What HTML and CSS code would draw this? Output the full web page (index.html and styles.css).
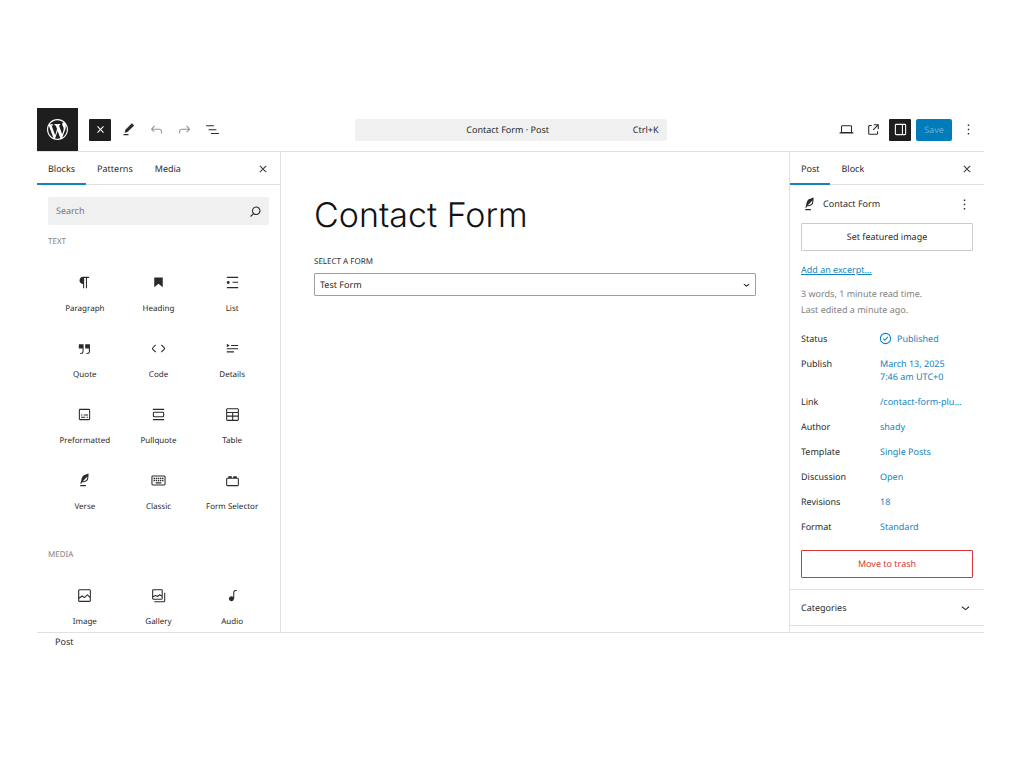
FILE: index.html
```html
<!DOCTYPE html>
<html lang="en">
<head>
<meta charset="utf-8">
<title>Contact Form</title>
<link rel="stylesheet" href="styles.css">
</head>
<body>
<div class="editor">
  <header class="header">
    <div class="header-start">
      <a class="logo" href="#" aria-label="View posts"><svg viewBox="0 0 20 20"><path d="M20 10c0-5.51-4.49-10-10-10C4.48 0 0 4.49 0 10c0 5.52 4.48 10 10 10 5.51 0 10-4.48 10-10zM7.78 15.37L4.37 6.22c.55-.02 1.17-.08 1.17-.08.5-.06.44-1.13-.06-1.11 0 0-1.45.11-2.37.11-.18 0-.37 0-.58-.01C4.12 2.69 6.87 1.11 10 1.11c2.33 0 4.45.87 6.05 2.34-.68-.11-1.65.39-1.65 1.58 0 .74.45 1.36.9 2.1.35.61.55 1.36.55 2.46 0 1.49-1.4 5-1.4 5l-3.03-8.37c.54-.02.82-.17.82-.17.5-.05.44-1.25-.06-1.22 0 0-1.44.12-2.38.12-.87 0-2.33-.12-2.33-.12-.5-.03-.56 1.2-.06 1.22l.92.08 1.26 3.41zM17.41 10c.24-.64.74-1.87.43-4.25.7 1.29 1.05 2.71 1.05 4.25 0 3.29-1.73 6.24-4.4 7.78.97-2.59 1.94-5.2 2.92-7.78zM6.1 18.09C3.12 16.65 1.11 13.53 1.11 10c0-1.3.23-2.48.72-3.59C3.25 10.3 4.67 14.2 6.1 18.09zm4.03-6.63l2.58 6.98c-.86.29-1.76.45-2.71.45-.79 0-1.57-.11-2.29-.33.81-2.38 1.62-4.74 2.42-7.1z"/></svg></a>
      <div class="tools">
        <button class="tool tool-active" aria-label="Close block inserter"><svg class="icon" viewBox="0 0 24 24"><path d="M12 13.06l3.712 3.713 1.061-1.06L13.061 12l3.712-3.712-1.06-1.06L12 10.938 8.288 7.227l-1.061 1.06L10.939 12l-3.712 3.712 1.06 1.061L12 13.061z"/></svg></button>
        <button class="tool" aria-label="Edit"><svg class="icon" viewBox="0 0 24 24"><path d="m20 6.500-3.200-3.200-9.300 9.200-1 4 4-1L20 6.500Zm-8 12H5V20h7v-1.500Z"/></svg></button>
        <button class="tool tool-disabled" aria-label="Undo" disabled><svg class="icon" viewBox="0 0 24 24"><path d="M18.300 11.700c-.6-.6-1.400-.9-2.300-.9H6.700l2.900-3.300-1.100-1-4.500 5L8.500 16l1-1-2.700-2.700H16c.5 0 .9.2 1.300.5 1 1 1 3.400 1 4.500v.3h1.500v-.2c0-1.500 0-4.300-1.500-5.700z"/></svg></button>
        <button class="tool tool-disabled" aria-label="Redo" disabled><svg class="icon" viewBox="0 0 24 24"><path d="M15.600 6.500l-1.100 1 2.900 3.300H8c-.9 0-1.700.3-2.300.9-1.400 1.500-1.400 4.200-1.400 5.600v.2h1.500v-.3c0-1.100 0-3.500 1-4.500.3-.3.7-.5 1.300-.5h9.200L14.500 15l1.100 1.100 4.600-4.600-4.600-5z"/></svg></button>
        <button class="tool" aria-label="Document overview"><svg class="icon" viewBox="0 0 24 24"><path d="M3 6h11v1.500H3V6Zm3.500 5.500h11V13h-11v-1.500ZM21 17H10v1.500h11V17Z"/></svg></button>
      </div>
    </div>
    <button class="command"><span class="command-title">Contact Form · Post</span><span>Ctrl+K</span></button>
    <div class="header-end">
      <button class="tool" aria-label="View"><svg class="icon" viewBox="0 0 24 24"><path d="M20.500 16h-.7V8c0-1.100-.9-2-2-2H6.200c-1.100 0-2 .9-2 2v8h-.7c-.8 0-1.500.7-1.500 1.500h20c0-.8-.7-1.500-1.500-1.500zM5.700 8c0-.3.2-.5.5-.5h11.600c.3 0 .5.2.5.5v7.600H5.700V8z"/></svg></button>
      <button class="tool" aria-label="View post"><svg class="icon" viewBox="0 0 24 24"><path d="M19.500 4.500h-7V6h4.440l-5.970 5.970 1.060 1.060L18 7.060v4.440h1.500v-7Zm-13 1a2 2 0 0 0-2 2v10a2 2 0 0 0 2 2h10a2 2 0 0 0 2-2v-3H17v3a.5.5 0 0 1-.5.5h-10a.5.5 0 0 1-.5-.5v-10a.5.5 0 0 1 .5-.5h3V5.500h-3Z"/></svg></button>
      <button class="tool tool-active" aria-label="Settings"><svg class="icon" viewBox="0 0 24 24"><path fill-rule="evenodd" d="M18 4H6c-1.100 0-2 .9-2 2v12c0 1.100.9 2 2 2h12c1.100 0 2-.9 2-2V6c0-1.100-.9-2-2-2zm-4 14.500H6c-.3 0-.5-.2-.5-.5V6c0-.3.2-.5.5-.5h8v13zm4.500-.5c0 .3-.2.5-.5.5h-2.500v-13H18c.3 0 .5.2.5.5v12z"/></svg></button>
      <button class="save">Save</button>
      <button class="tool" aria-label="Options"><svg class="icon" viewBox="0 0 24 24"><path d="M13 19h-2v-2h2v2zm0-6h-2v-2h2v2zm0-6h-2V5h2v2z"/></svg></button>
    </div>
  </header>

  <div class="body">
    <section class="inserter">
      <div class="tabs">
        <button class="tab tab-current">Blocks</button>
        <button class="tab">Patterns</button>
        <button class="tab">Media</button>
        <button class="tool tab-close" aria-label="Close"><svg class="icon" viewBox="0 0 24 24"><path d="m13.060 12 6.470-6.470-1.060-1.060L12 10.940 5.530 4.470 4.470 5.530 10.940 12l-6.470 6.470 1.060 1.060L12 13.060l6.470 6.470 1.060-1.060L13.060 12Z"/></svg></button>
      </div>
      <div class="blocks">
        <div class="search">
          <input class="search-input" type="search" placeholder="Search" aria-label="Search">
          <svg class="icon" viewBox="0 0 24 24"><path d="M13 5c-3.300 0-6 2.700-6 6 0 1.400.5 2.700 1.300 3.700l-3.800 3.800 1.100 1.100 3.800-3.800c1 .8 2.300 1.300 3.700 1.300 3.300 0 6-2.700 6-6S16.300 5 13 5zm0 10.500c-2.500 0-4.500-2-4.500-4.500s2-4.500 4.500-4.500 4.500 2 4.500 4.500-2 4.500-4.500 4.500z"/></svg>
        </div>
        <h2 class="group-title">Text</h2>
        <div class="grid">
          <button class="tile"><svg class="icon" viewBox="0 0 24 24"><path d="m9.996 14v-.225l.004 0v6.225h1.500v-14.500h2.500v14.500h1.500v-14.500h3v-1.500h-8.504c-2.761 0-5 2.239-5 5 0 2.761 2.239 5 5 5z"/></svg>Paragraph</button>
          <button class="tile"><svg class="icon" viewBox="0 0 24 24"><path d="M6 5V18.591L12 13.847L18 18.591V5H6Z"/></svg>Heading</button>
          <button class="tile"><svg class="icon" viewBox="0 0 24 24"><path d="M4 4v1.500h16V4H4zm8 8.500h8V11h-8v1.500zM4 20h16v-1.500H4V20zm4-8c0-1.100-.9-2-2-2s-2 .9-2 2 .9 2 2 2 2-.9 2-2z"/></svg>List</button>
          <button class="tile"><svg class="icon" viewBox="0 0 24 24"><path d="M13 6v6h5.200v4c0 .8-.2 1.400-.5 1.700-.6.6-1.600.6-2.500.5h-.3v1.500h.5c1 0 2.300-.1 3.300-1 .6-.6 1-1.600 1-2.800V6H13zm-9 6h5.200v4c0 .8-.2 1.400-.5 1.700-.6.6-1.600.6-2.500.5h-.3v1.500h.5c1 0 2.300-.1 3.300-1 .6-.6 1-1.600 1-2.800V6H4v6z"/></svg>Quote</button>
          <button class="tile"><svg class="icon" viewBox="0 0 24 24"><path d="M20.800 10.700l-4.300-4.300-1.100 1.100 4.300 4.300c.1.100.1.300 0 .4l-4.300 4.300 1.100 1.100 4.300-4.300c.7-.8.7-1.900 0-2.600zM4.200 11.800l4.300-4.300-1-1-4.300 4.300c-.7.700-.7 1.800 0 2.500l4.300 4.300 1.100-1.100-4.300-4.300c-.2-.1-.2-.3-.1-.4z"/></svg>Code</button>
          <button class="tile"><svg class="icon" viewBox="0 0 24 24"><path d="M4 16h10v1.500H4V16Zm0-4.500h16V13H4v-1.500ZM10 7h10v1.500H10V7ZM4 5.250l4 2.500-4 2.500v-5Z"/></svg>Details</button>
          <button class="tile"><svg class="icon" viewBox="0 0 24 24"><path d="M18 4H6c-1.100 0-2 .9-2 2v12c0 1.100.9 2 2 2h12c1.100 0 2-.9 2-2V6c0-1.100-.9-2-2-2zm.5 14c0 .3-.2.5-.5.5H6c-.3 0-.5-.2-.5-.5V6c0-.3.2-.5.5-.5h12c.3 0 .5.2.5.5v12zM7 16.500h6V15H7v1.500zm4-3h6V12h-6v1.500zM9 12H7v1.500h2V12zm6 4.500h2V15h-2v1.500z"/></svg>Preformatted</button>
          <button class="tile"><svg class="icon" viewBox="0 0 24 24"><path d="M18 8H6c-1.100 0-2 .9-2 2v4c0 1.100.9 2 2 2h12c1.100 0 2-.9 2-2v-4c0-1.100-.9-2-2-2zm.5 6c0 .3-.2.5-.5.5H6c-.3 0-.5-.2-.5-.5v-4c0-.3.2-.5.5-.5h12c.3 0 .5.2.5.5v4zM4 4v1.500h16V4H4zm0 16h16v-1.500H4V20z"/></svg>Pullquote</button>
          <button class="tile"><svg class="icon" viewBox="0 0 24 24"><path d="M19 3H5c-1.100 0-2 .9-2 2v14c0 1.100.9 2 2 2h14c1.100 0 2-.9 2-2V5c0-1.100-.9-2-2-2zM5 4.500h14c.3 0 .5.2.5.5v3.500h-15V5c0-.3.2-.5.5-.5zm8 5.500h6.500v3.500H13V10zm-1.500 3.500h-7V10h7v3.500zm-7 5.500v-4h7v4.500H5c-.3 0-.5-.2-.5-.5zm14.500.5h-6V15h6.500v4c0 .3-.2.5-.5.5z"/></svg>Table</button>
          <button class="tile"><svg class="icon" viewBox="0 0 24 24"><path d="M17.800 2l-.9.3c-.1 0-3.600 1-5.200 2.100C10 5.500 9.300 6.500 8.900 7.100c-.6.9-1.700 4.700-1.700 6.300l-.9 2.300c-.2.4 0 .8.4 1 .1 0 .2.100.3.100.3 0 .6-.2.7-.5l.6-1.500c.3 0 .7-.1 1.200-.2.7-.1 1.400-.3 2.200-.5.8-.2 1.600-.5 2.400-.8.7-.3 1.400-.7 1.900-1.200s.8-1.200 1-1.900c.2-.7.3-1.600.4-2.400.1-.8.1-1.700.2-2.500 0-.8.1-1.500.2-2.100V2zm-1.900 5.600c-.1.8-.2 1.500-.3 2.100-.2.6-.4 1-.6 1.300-.3.3-.8.6-1.400.9-.7.3-1.400.5-2.200.8-.6.2-1.300.3-1.800.4L15 7.500c.3-.3.6-.7 1-1.100 0 .4 0 .8-.1 1.200zM6 20h8v-1.500H6V20z"/></svg>Verse</button>
          <button class="tile"><svg class="icon" viewBox="0 0 24 24"><path fill-rule="evenodd" d="M4 5h16c1.100 0 2 .9 2 2v10c0 1.100-.9 2-2 2H4c-1.100 0-2-.9-2-2V7c0-1.100.9-2 2-2zm0 1.500c-.3 0-.5.2-.5.500v10c0 .3.200.5.5.5h16c.3 0 .5-.2.5-.5V7c0-.3-.2-.5-.5-.5zM5 8.200h2v2H5zm3 0h2v2H8zm3 0h2v2h-2zm3 0h2v2h-2zm3 0h2v2h-2zM5 11.200h2v2H5zm3 0h2v2H8zm3 0h2v2h-2zm3 0h2v2h-2zm3 0h2v2h-2zM8 14.500h8v1.700H8z"/></svg>Classic</button>
          <button class="tile"><svg class="icon" viewBox="0 0 24 24"><path d="M19 8h-1V6h-5v2h-2V6H6v2H5c-1.100 0-2 .9-2 2v8c0 1.100.9 2 2 2h14c1.100 0 2-.9 2-2v-8c0-1.100-.9-2-2-2zm.5 10c0 .3-.2.5-.5.5H5c-.3 0-.5-.2-.5-.5v-8c0-.3.2-.5.5-.5h14c.3 0 .5.2.5.5v8z"/></svg>Form Selector</button>
        </div>
        <h2 class="group-title">Media</h2>
        <div class="grid">
          <button class="tile"><svg class="icon" viewBox="0 0 24 24"><path d="M19 3H5c-1.100 0-2 .9-2 2v14c0 1.100.9 2 2 2h14c1.100 0 2-.9 2-2V5c0-1.100-.9-2-2-2zM5 4.500h14c.3 0 .5.2.5.5v8.400l-3-2.900c-.3-.3-.8-.3-1 0L11.900 14 9 12c-.3-.2-.6-.2-.8 0l-3.600 2.600V5c-.1-.3.1-.5.4-.5zm14 15H5c-.3 0-.5-.2-.5-.5v-2.400l4.100-3 3 1.900c.3.2.7.2.9-.1L16 12l3.500 3.400V19c0 .3-.2.5-.5.5z"/></svg>Image</button>
          <button class="tile"><svg class="icon" viewBox="0 0 24 24"><path fill-rule="evenodd" d="M16.375 4.500H4.625a.125.125 0 0 0-.125.125v8.254l2.859-1.540a.75.75 0 0 1 .68-.016l2.384 1.142 2.890-2.074a.75.75 0 0 1 .874 0l2.313 1.660V4.625a.125.125 0 0 0-.125-.125Zm.125 9.398-2.750-1.975-2.813 2.020a.75.75 0 0 1-.76.067l-2.444-1.170L4.500 14.583v1.792c0 .069.056.125.125.125h11.750a.125.125 0 0 0 .125-.125v-2.477ZM4.625 3C3.728 3 3 3.728 3 4.625v11.750C3 17.273 3.728 18 4.625 18h11.750c.898 0 1.625-.727 1.625-1.625V4.625C18 3.728 17.273 3 16.375 3H4.625ZM20 8v11c0 .69-.31 1-.999 1H6v1.500h13.001c1.520 0 2.499-.982 2.499-2.500V8H20Z"/></svg>Gallery</button>
          <button class="tile"><svg class="icon" viewBox="0 0 24 24"><path d="M17.700 4.300c-1.200 0-2.800 0-3.800 1-.6.6-.9 1.500-.9 2.600V14c-.6-.6-1.500-1-2.500-1C8.600 13 7 14.600 7 16.500S8.600 20 10.500 20c1.500 0 2.800-1 3.300-2.300.5-.8.7-1.800.7-2.500V7.900c0-.7.2-1.200.5-1.600.6-.6 1.800-.6 2.800-.6h.3V4.300h-.4z"/></svg>Audio</button>
        </div>
      </div>
    </section>

    <main class="canvas">
      <h1 class="title">Contact Form</h1>
      <label class="field-label" for="form">Select a form</label>
      <div class="select-wrap">
        <select class="select" id="form"><option>Test Form</option></select>
        <svg class="select-arrow" viewBox="0 0 24 24"><path d="M17.500 11.600L12 16l-5.500-4.400.9-1.200L12 14l4.500-3.600 1 1.200z"/></svg>
      </div>
    </main>

    <aside class="sidebar">
      <div class="tabs">
        <button class="tab tab-current">Post</button>
        <button class="tab">Block</button>
        <button class="tool tab-close" aria-label="Close settings"><svg class="icon" viewBox="0 0 24 24"><path d="m13.060 12 6.470-6.470-1.060-1.060L12 10.940 5.530 4.470 4.470 5.530 10.940 12l-6.470 6.470 1.060 1.060L12 13.060l6.470 6.470 1.060-1.060L13.060 12Z"/></svg></button>
      </div>
      <div class="summary">
        <div class="card">
          <svg class="icon" viewBox="0 0 24 24"><path d="M17.800 2l-.9.3c-.1 0-3.600 1-5.200 2.100C10 5.500 9.300 6.500 8.900 7.100c-.6.9-1.700 4.700-1.700 6.300l-.9 2.300c-.2.4 0 .8.4 1 .1 0 .2.100.3.100.3 0 .6-.2.7-.5l.6-1.500c.3 0 .7-.1 1.200-.2.7-.1 1.400-.3 2.200-.5.8-.2 1.600-.5 2.400-.8.7-.3 1.400-.7 1.900-1.200s.8-1.200 1-1.900c.2-.7.3-1.600.4-2.400.1-.8.1-1.700.2-2.500 0-.8.1-1.500.2-2.100V2zm-1.900 5.600c-.1.8-.2 1.500-.3 2.100-.2.6-.4 1-.6 1.300-.3.3-.8.6-1.400.9-.7.3-1.400.5-2.200.8-.6.2-1.300.3-1.800.4L15 7.500c.3-.3.6-.7 1-1.100 0 .4 0 .8-.1 1.200zM6 20h8v-1.500H6V20z"/></svg>
          <span class="card-title">Contact Form</span>
          <button class="card-more" aria-label="Actions"><svg class="icon" viewBox="0 0 24 24"><path d="M13 19h-2v-2h2v2zm0-6h-2v-2h2v2zm0-6h-2V5h2v2z"/></svg></button>
        </div>
        <button class="outline">Set featured image</button>
        <a class="excerpt" href="#">Add an excerpt…</a>
        <p class="meta">3 words, 1 minute read time.<br>Last edited a minute ago.</p>
        <dl class="rows">
          <div class="row"><dt>Status</dt><dd><button class="value"><svg class="icon value-icon" viewBox="0 0 24 24"><g fill="none" stroke="currentColor" stroke-width="1.500"><circle cx="12" cy="12" r="7.250"/><path d="m8.700 12.200 2.400 2.300 4.200-4.800"/></g></svg>Published</button></dd></div>
          <div class="row"><dt>Publish</dt><dd><button class="value">March 13, 2025<br>7:46 am UTC+0</button></dd></div>
          <div class="row"><dt>Link</dt><dd><button class="value">/contact-form-plu…</button></dd></div>
          <div class="row"><dt>Author</dt><dd><button class="value">shady</button></dd></div>
          <div class="row"><dt>Template</dt><dd><button class="value">Single Posts</button></dd></div>
          <div class="row"><dt>Discussion</dt><dd><button class="value">Open</button></dd></div>
          <div class="row"><dt>Revisions</dt><dd><a class="value" href="#">18</a></dd></div>
          <div class="row"><dt>Format</dt><dd><button class="value">Standard</button></dd></div>
        </dl>
        <button class="outline outline-danger">Move to trash</button>
      </div>
      <button class="panel">Categories<svg class="icon" viewBox="0 0 24 24"><path d="M17.500 11.600L12 16l-5.500-4.400.9-1.200L12 14l4.500-3.600 1 1.200z"/></svg></button>
    </aside>
  </div>

  <footer class="footer">Post</footer>
</div>
</body>
</html>
```

FILE: styles.css
```css
* { box-sizing: border-box; }

body {
  margin: 0;
  background: #fff;
  color: #2a2a2a;
  font: 9px/12px "Noto Sans", sans-serif;
  text-rendering: geometricPrecision;
}

button, input, select {
  margin: 0;
  padding: 0;
  border: 0;
  background: none;
  color: inherit;
  font: inherit;
  text-rendering: inherit;
}

.icon {
  display: block;
  flex: none;
  width: 17px;
  height: 17px;
  fill: currentColor;
}

.editor {
  display: flex;
  flex-direction: column;
  height: 100vh;
  padding: 108px 40px 117px 37px;
}

/* Top bar */
.header {
  display: grid;
  flex: none;
  grid-template-columns: 1fr minmax(0, 312px) 1fr;
  align-items: center;
  height: 44px;
  border-bottom: 1px solid #e0e0e0;
}

.header-start { display: flex; align-items: center; }

.logo {
  display: flex;
  align-items: center;
  justify-content: center;
  width: 41px;
  height: 43px;
  background: #1e1e1e;
  color: #fff;
}

.logo svg { width: 21px; height: 21px; fill: currentColor; }

.tools { display: flex; gap: 6px; padding-left: 11px; }

.tool {
  display: flex;
  align-items: center;
  justify-content: center;
  width: 22px;
  height: 22px;
  border-radius: 1px;
}

.tool-active { background: #1e1e1e; color: #fff; }
.tool-disabled { color: #949494; }

.command {
  display: flex;
  align-items: center;
  height: 22px;
  padding: 0 8px 0 28px;
  border-radius: 3px;
  background: #f0f0f0;
}

.command-title { flex: 1; text-align: center; }

.header-end {
  display: flex;
  align-items: center;
  justify-content: flex-end;
  gap: 5px;
  padding-right: 5px;
}

.save {
  width: 36px;
  height: 22px;
  border-radius: 2px;
  background: #007cba;
  color: #66b0d6;
}

/* Three columns */
.body {
  display: grid;
  flex: 1;
  grid-template-columns: 244px minmax(0, 1fr) 195px;
  min-height: 0;
}

.inserter, .sidebar {
  display: flex;
  flex-direction: column;
  min-height: 0;
  overflow: hidden;
}

.inserter { border-right: 1px solid #e0e0e0; }
.sidebar { border-left: 1px solid #e0e0e0; }

.tabs {
  display: flex;
  flex: none;
  align-items: center;
  height: 33px;
  padding-right: 6px;
  box-shadow: inset 0 -1px #e0e0e0;
}

.tab { height: 33px; padding: 0 11px; }
.tab-current { box-shadow: inset 0 -2px #1284be; }
.tab-close { margin-left: auto; }
.tab-close .icon { width: 10px; height: 10px; stroke: currentColor; }

/* Block library */
.blocks { padding: 12px 11px 0; }

.search {
  display: flex;
  align-items: center;
  height: 28px;
  padding: 0 5px 0 8px;
  border-radius: 2px;
  background: #f0f0f0;
}

.search-input { flex: 1; min-width: 0; outline: 0; }
.search-input::placeholder { color: #757575; }

.group-title {
  margin: 11px 0 13px;
  color: #808080;
  font-size: 8px;
  font-weight: 400;
  line-height: 12px;
  text-transform: uppercase;
}

.grid + .group-title { margin-top: 24px; }

.grid { display: grid; grid-template-columns: repeat(3, 1fr); }

.tile {
  display: flex;
  flex-direction: column;
  align-items: center;
  justify-content: center;
  gap: 12px;
  height: 66px;
  font-size: 8px;
}

/* Canvas */
.canvas { padding: 40px 33px 0; }

.title {
  margin: 0 0 16px;
  color: #111;
  font: 300 34px/48px Inter, sans-serif;
}

.field-label {
  display: block;
  margin-bottom: 5px;
  font-size: 8px;
  text-transform: uppercase;
}

.select-wrap { position: relative; }

.select {
  display: block;
  width: 100%;
  height: 23px;
  padding: 0 20px 0 5px;
  border: 1px solid #a0a0a0;
  border-radius: 1px;
  appearance: none;
}

.select-arrow {
  position: absolute;
  top: 5px;
  right: 3px;
  width: 13px;
  height: 13px;
  pointer-events: none;
}

/* Settings */
.summary { padding: 11px; }

.card { display: flex; align-items: center; height: 16px; }
.card-title { flex: 1; padding-left: 5px; }

.outline {
  display: block;
  width: 100%;
  height: 28px;
  margin-top: 11px;
  border: 1px solid #ccc;
  border-radius: 1px;
}

.outline-danger { margin-top: 13px; border-color: #d63638; color: #d63638; }

.excerpt {
  display: block;
  margin-top: 13px;
  color: #1284be;
}

.meta { margin: 10px 0 0; color: #808080; line-height: 16px; }

.rows { display: grid; gap: 4px; margin: 10px 0 0; }
.row { display: grid; grid-template-columns: 79px minmax(0, 1fr); line-height: 13px; }
.row dt { padding: 4px 0; }
.row dd { margin: 0; padding: 4px 0; }

.value {
  display: flex;
  align-items: center;
  color: #1284be;
  line-height: 13px;
  text-align: left;
  text-decoration: none;
  white-space: nowrap;
}

.value-icon { margin: -2px 3px -2px -3px; }

.panel {
  display: flex;
  flex: none;
  align-items: center;
  justify-content: space-between;
  height: 37px;
  padding: 0 10px 0 11px;
  border-top: 1px solid #e0e0e0;
  border-bottom: 1px solid #e0e0e0;
}

.footer {
  flex: none;
  height: 19px;
  padding: 3px 18px;
  border-top: 1px solid #e0e0e0;
}
```
